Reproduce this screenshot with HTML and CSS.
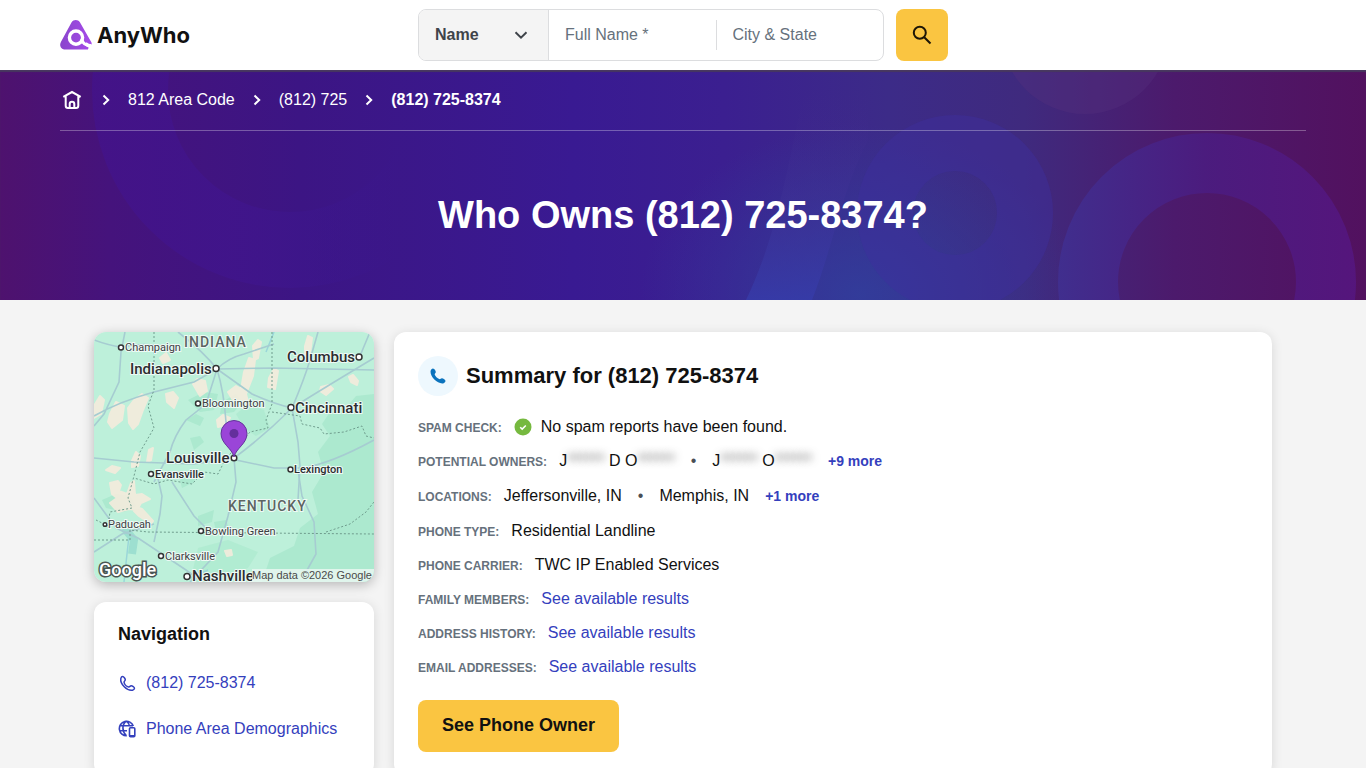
FILE: index.html
```html
<!DOCTYPE html>
<html lang="en">
<head>
  <meta charset="utf-8">
  <meta name="viewport" content="width=device-width, initial-scale=1">
  <title>Who Owns (812) 725-8374? | AnyWho</title>
  <link rel="stylesheet" href="styles.css">
</head>

<body>
  <!-- header -->
  <header class="header">
    <a class="logo" href="#">
      <svg width="32" height="30" viewBox="0 0 32 30" aria-hidden="true">
        <defs>
          <linearGradient id="logo-fill" x1="0" y1="0" x2="1" y2="0">
            <stop offset="0" stop-color="#8a45cc"/>
            <stop offset="1" stop-color="#a64bea"/>
          </linearGradient>
        </defs>
        <path d="M11.6 2.2C13.5-.7 18-.7 19.9 2.2L31.5 22.5 31.8 24.4C29.6 24.6 27.8 23.6 26.7 22.3L24.4 24.6C25.5 26 27 27 28.6 27.6L28 29.5H5C1 29.5-1 25.5.9 22Z" fill="url(#logo-fill)"/>
        <circle cx="16" cy="17.6" r="6.6" fill="none" stroke="#fff" stroke-width="3.4"/>
        <path d="M21.6 19C22.600 23.400 26 25.800 31.400 25.600" fill="none" stroke="#fff" stroke-width="3"/>
      </svg>
      <span>AnyWho</span>
    </a>

    <form class="search">
      <div class="search-box">
        <div class="search-type">
          <select aria-label="Search type">
            <option>Name</option>
            <option>Phone</option>
            <option>Address</option>
          </select>
          <svg class="select-arrow" width="14" height="8" viewBox="0 0 14 8" aria-hidden="true"><path d="M1.5 1.2L7 6.6 12.500 1.200"/></svg>
        </div>
        <input class="search-name" type="text" placeholder="Full Name *" aria-label="Full Name">
        <input class="search-place" type="text" placeholder="City &amp; State" aria-label="City and State">
      </div>
      <button class="search-button" type="submit" aria-label="Search">
        <svg width="20" height="20" viewBox="0 0 20 20" aria-hidden="true"><circle cx="7.800" cy="7.800" r="6"/><path d="M12.200 12.200L18.500 18.500"/></svg>
      </button>
    </form>
  </header>

  <!-- hero -->
  <section class="hero">
    <svg class="hero-art" viewBox="0 0 1366 230" preserveAspectRatio="xMidYMid slice" aria-hidden="true">
      <defs>
        <linearGradient id="base" x1="0" x2="1" y1="0" y2="0">
          <stop offset="0" stop-color="#4e126e"/>
          <stop offset=".08" stop-color="#45137c"/>
          <stop offset=".22" stop-color="#3c1584"/>
          <stop offset=".42" stop-color="#391a92"/>
          <stop offset=".53" stop-color="#3b1f90"/>
          <stop offset=".65" stop-color="#3c2b88"/>
          <stop offset=".75" stop-color="#3f2a7e"/>
          <stop offset=".86" stop-color="#4c1a6c"/>
          <stop offset="1" stop-color="#52115f"/>
        </linearGradient>
        <linearGradient id="ring-left" gradientUnits="userSpaceOnUse" x1="90" x2="400" y1="0" y2="0">
          <stop offset="0" stop-color="#43138a"/>
          <stop offset=".5" stop-color="#40158c"/>
          <stop offset="1" stop-color="#3a1893" stop-opacity="0"/>
        </linearGradient>
        <linearGradient id="ring-right" gradientUnits="userSpaceOnUse" x1="1057" x2="1356" y1="0" y2="0">
          <stop offset="0" stop-color="#402f90"/>
          <stop offset=".5" stop-color="#4b1c80"/>
          <stop offset="1" stop-color="#55167f"/>
        </linearGradient>
        <linearGradient id="strand" x1="0" x2="0" y1="0" y2="1">
          <stop offset="0" stop-color="#42298a" stop-opacity="0"/>
          <stop offset=".5" stop-color="#3f3296" stop-opacity=".5"/>
          <stop offset="1" stop-color="#363caa"/>
        </linearGradient>
        <radialGradient id="glow">
          <stop offset="0" stop-color="#30409e"/>
          <stop offset="1" stop-color="#30409e" stop-opacity="0"/>
        </radialGradient>
      </defs>
      <rect width="1366" height="230" fill="url(#base)"/>
      <ellipse cx="860" cy="225" rx="220" ry="170" fill="url(#glow)" opacity=".8"/>
      <circle cx="290" cy="20" r="160" fill="none" stroke="url(#ring-left)" stroke-width="76" opacity=".8"/>
      <circle cx="1085" cy="-40" r="84" fill="#56307f" opacity=".35"/>
      <path d="M805 20C790 80 780 160 746 230H812C832 180 842 120 868 70V20Z" fill="url(#strand)" opacity=".8"/>
      <circle cx="955" cy="143" r="70" fill="none" stroke="#3d2f9e" stroke-width="56" opacity=".45"/>
      <circle cx="1207" cy="212" r="119" fill="none" stroke="url(#ring-right)" stroke-width="60" opacity=".9"/>
    </svg>

    <div class="hero-inner">
      <nav class="breadcrumbs" aria-label="Breadcrumb">
        <a class="home" href="#" aria-label="Home">
          <svg width="20" height="20" viewBox="0 0 20 20" aria-hidden="true"><path d="M1.300 6.800L10 2 18.700 6.800M3.700 6V15.700Q3.700 18 6 18H14Q16.300 18 16.300 15.700V6M7.700 17.500V14Q7.700 11.800 10 11.800T12.300 14V17.500"/></svg>
        </a>
        <svg class="crumb-arrow" width="8" height="12" viewBox="0 0 8 12" aria-hidden="true"><path d="M1.500 1.500L6.200 6 1.500 10.500"/></svg>
        <a href="#">812 Area Code</a>
        <svg class="crumb-arrow" width="8" height="12" viewBox="0 0 8 12" aria-hidden="true"><path d="M1.500 1.500L6.200 6 1.500 10.500"/></svg>
        <a href="#">(812) 725</a>
        <svg class="crumb-arrow" width="8" height="12" viewBox="0 0 8 12" aria-hidden="true"><path d="M1.500 1.500L6.200 6 1.500 10.500"/></svg>
        <strong>(812) 725-8374</strong>
      </nav>
      <h1>Who Owns (812) 725-8374?</h1>
    </div>
  </section>

  <!-- content -->
  <main class="content">
    <aside class="sidebar">
      <div class="map">
        <svg viewBox="0 0 280 250" role="img" aria-label="Map of Louisville, Kentucky">
          <rect width="280" height="250" fill="#bdf0da"/>
          <!-- woodland -->
          <g fill="#ace9cf">
            <path d="M280 62L262 64 252 76 240 74 228 92 236 104 224 120 230 140 218 160 224 182 206 196 200 214 176 226 168 250H280Z"/>
            <path d="M94 68l16-8 14 2-4 16-14 2zM128 70l14-8 6 8-8 10-14 2zM92 88l10-6 8 4-4 8zM96 106l10-2 4 6-10 8zM86 148l18-12-4 14-12 6zM8 168l14-6 14 2 6 10-12 6-18-4zM104 184l16-6-2 12-14 4zM120 190l12-2 2 6-12 6z"/>
            <path d="M142 82l12-10 16 6 6 18-14 8-12-8zM104 216l30-8 30 12-10 16-40 14H96z" opacity=".7"/>
          </g>
          <!-- built-up areas -->
          <g fill="#f4ebdc" stroke="#f4ebdc" stroke-width="2" stroke-linejoin="round" opacity=".9">
            <path d="M0 74l6-10 4 4-3 14-7 4zM16 82l6-12 8 4-2 14-10 8-4-6zM34 76l6-8 8-6 6 4-5 12-5 14-5 5-4-6zM72 62l7-2 5 6-4 10-7-6zM99 52l4-5 8 2 2 10-7 5zM134 60l8-6 9 5 3 10-2 8-10-4zM150 40l5-14 6 2-2 16-7 18-5-4zM159 14l5-6 3 2-3 16-4 2zM175 46l5-9 4 2-3 18-7-2zM211 14l3-10 4 2-2 16-5 4zM227 55l8-2 4 4-7 6-6-4zM255 45l4-2 5 6-1 4-6-3zM123 88l6-5 7 3-5 7-7 2zM66 26l6-5 4 7-7 3z"/>
            <path d="M12 138l6-4 8 2-5 5zM16 151l8-2 3 4-2 6 8 3 4-11 3-2 1 14 7-1 8 5-9 4-4 7-8-1-11 3-8-9 7-5-5-4zM38 129l4-9 4 4-2 10-6 1zM55 118l4-2-2 12-4 2zM42 175l6 2 11 12-2 3-12-8-5-5zM131 219l6-1 1 5-5 1z"/>
          </g>
          <!-- rivers -->
          <g fill="none" stroke="#9ad6d9" stroke-width="1.500">
            <path d="M36 196Q34 212 30 250"/>
            <path d="M30 196L40 208 38 222" stroke="#9ddfd0" stroke-width="8"/>
            <path d="M96 246l18-8M180 0l-8 20"/>
          </g>
          <!-- roads -->
          <g fill="none" stroke="#a6ccd1" stroke-width="1.600">
            <path d="M0 8Q16 14 28 15Q62 8 75 20M31 0L27 20 25 50 10 82 0 94M0 84Q24 70 60 60L100 50 123 37"/>
            <path d="M123 37Q134 26 150 22L180 12M123 37L180 36 280 38M123 37L158 62Q180 72 198 76M123 37Q130 60 132 90L140 124M123 37Q110 20 84 0M123 37L112 72 92 88Q80 104 76 120L60 150"/>
            <path d="M198 76Q210 48 216 28L224 0M198 76Q230 56 280 26M198 76L204 110 206 134 204 168M198 76Q170 104 140 126L100 132 40 130 0 126"/>
            <path d="M62 138L68 164 66 182 60 210M140 126L142 150 134 184 124 220 96 250M142 128L180 136 208 136Q236 132 280 108M204 138L208 164 220 190 222 222 212 240"/>
            <path d="M78 150L100 184 116 200M0 166L22 196 44 206 92 238 108 250M0 220L28 202 60 192M266 24L276 0"/>
          </g>
          <!-- state borders -->
          <g fill="none" stroke="#6f9c8d" stroke-width="1" stroke-dasharray="2 2">
            <path d="M60 0V58L54 74 60 96 46 120 40 144 34 166 38 176 16 180 14 194 2 188M178 0V72L172 88 174 96 156 100 146 112 132 126 124 142 110 140 98 152 74 148 60 152 40 146M178 80L206 84 208 92 226 96 230 102 250 100 268 94 272 104 280 106M0 208H36V198L54 200 280 202M232 200L256 192 272 180 280 170"/>
          </g>

          <g class="map-dots">
            <circle cx="27" cy="15.500" r="2.500"/><circle cx="122" cy="36.500" r="3"/><circle cx="265" cy="25" r="3"/><circle cx="197" cy="75.500" r="3"/>
            <circle cx="104" cy="71.500" r="2.500"/><circle cx="140" cy="126" r="2.800"/><circle cx="57" cy="142" r="2.500"/><circle cx="196.500" cy="137.500" r="2.500"/>
            <circle cx="11" cy="192.500" r="1.800"/><circle cx="107" cy="199" r="2.500"/><circle cx="67" cy="224" r="2.500"/><circle cx="93" cy="244.500" r="3"/>
          </g>
          <g class="map-labels">
            <text class="state" x="90" y="15">INDIANA</text>
            <text class="state" x="134" y="179">KENTUCKY</text>
            <text class="town" x="31" y="19">Champaign</text>
            <text class="city" x="36" y="42">Indianapolis</text>
            <text class="city" x="193" y="30">Columbus</text>
            <text class="city" x="201" y="81">Cincinnati</text>
            <text class="town" x="108" y="75">Bloomington</text>
            <text class="city" x="72" y="131">Louisville</text>
            <text class="town dark" x="61" y="146">Evansville</text>
            <text class="town dark" x="200" y="141">Lexington</text>
            <text class="town" x="14" y="196">Paducah</text>
            <text class="town" x="111" y="203">Bowling Green</text>
            <text class="town" x="71" y="228">Clarksville</text>
            <text class="city" x="98" y="249">Nashville</text>
          </g>

          <!-- pin -->
          <path d="M140 125C138 116 127 112 127 101.500A13 13 0 0 1 153 101.500C153 112 142 116 140 125Z" fill="#9a45d8" stroke="#64339b" stroke-width="1"/>
          <circle cx="140" cy="101.500" r="4.500" fill="#642f9c"/>

          <text class="google" x="5" y="244">Google</text>
          <rect x="158" y="237" width="122" height="13" fill="#e9f7f1" opacity=".85"/>
          <text class="map-credit" x="278" y="247">Map data ©2026 Google</text>
        </svg>
      </div>

      <nav class="card side-nav">
        <h2>Navigation</h2>
        <a href="#summary">
          <svg width="18" height="18" viewBox="-1 -1 19 19" aria-hidden="true"><path d="M2 3.600C2.300 2.500 3.100 1.700 4 1.700 5 1.700 6.700 4 6.700 5.200 6.700 6.400 5.200 6.500 5.400 7.800 5.800 9.900 8.100 12.300 10.200 12.700 11.500 12.900 11.700 11.400 12.900 11.400 14.100 11.400 16.400 13 16.400 14.100 16.400 15 15.400 15.800 14.300 16.100 8.600 17.200.9 9.500 2 3.600Z"/></svg>
          <span>(812) 725-8374</span>
        </a>
        <a href="#demographics">
          <svg width="18" height="18" viewBox="0 0 18 18" aria-hidden="true"><path d="M15.300 6A7.200 7.200 0 1 0 8.800 15.700M8.300 1.200C3.800 4.500 3.800 11.500 8.300 15.700M8.300 1.200C10.200 2.500 11.300 4.300 11.500 6.300M1.700 5.700H15M1.500 10.800H9"/><rect x="11.500" y="7.800" width="5.300" height="9" rx="1"/><path d="M12 15.800H16.300"/></svg>
          <span>Phone Area Demographics</span>
        </a>
      </nav>
    </aside>

    <section class="card summary" id="summary">
      <div class="summary-title">
        <span class="round-icon">
          <svg width="16" height="16" viewBox="0 0 16 16" aria-hidden="true"><path d="M.6 2.900C.8 1.600 2 .5 3 .5 4.400.5 5.800 2.800 5.800 4.100 5.800 5.300 4.500 5.500 4.700 6.600 5.100 8.300 7.500 10.700 9.200 11.100 10.400 11.400 10.700 10.200 11.900 10.200 13.200 10.200 15.500 11.700 15.500 13 15.500 14.200 14.100 15.300 12.800 15.400 7 15.900-.3 8.500.6 2.900Z"/></svg>
        </span>
        <h2>Summary for (812) 725-8374</h2>
      </div>

      <dl class="facts">
        <div class="fact">
          <dt>SPAM CHECK:</dt>
          <dd class="spam">
            <svg width="18" height="18" viewBox="0 0 18 18" aria-hidden="true"><circle cx="9" cy="9" r="8.500" fill="#76b93f"/><path d="M6.200 9.200L8.200 11.100 11.800 7.400" fill="none" stroke="#fff" stroke-width="1.500"/></svg>
            <span>No spam reports have been found.</span>
          </dd>
        </div>
        <div class="fact fact-list">
          <dt>POTENTIAL OWNERS:</dt>
          <dd class="values">
            <span>J<span class="hidden-name">******</span> D O<span class="hidden-name">******</span></span>
            <span class="bullet">•</span>
            <span>J<span class="hidden-name">******</span> O<span class="hidden-name">******</span></span>
            <a class="more" href="#">+9 more</a>
          </dd>
        </div>
        <div class="fact fact-list">
          <dt>LOCATIONS:</dt>
          <dd class="values">
            <span>Jeffersonville, IN</span>
            <span class="bullet">•</span>
            <span>Memphis, IN</span>
            <a class="more" href="#">+1 more</a>
          </dd>
        </div>
        <div class="fact">
          <dt>PHONE TYPE:</dt>
          <dd>Residential Landline</dd>
        </div>
        <div class="fact">
          <dt>PHONE CARRIER:</dt>
          <dd>TWC IP Enabled Services</dd>
        </div>
        <div class="fact">
          <dt>FAMILY MEMBERS:</dt>
          <dd><a href="#">See available results</a></dd>
        </div>
        <div class="fact">
          <dt>ADDRESS HISTORY:</dt>
          <dd><a href="#">See available results</a></dd>
        </div>
        <div class="fact">
          <dt>EMAIL ADDRESSES:</dt>
          <dd><a href="#">See available results</a></dd>
        </div>
      </dl>

      <button class="owner-button" type="button">See Phone Owner</button>
    </section>
  </main>
</body>
</html>
```

FILE: styles.css
```css
* {
  box-sizing: border-box;
}

body {
  margin: 0;
  background: #f4f4f4;
  color: #111;
  font-family: "Liberation Sans", Arial, sans-serif;
  font-size: 16px;
  line-height: 24px;
}

h1, h2, dl, dd {
  margin: 0;
}

a {
  color: #3440bd;
  text-decoration: none;
}

button, input, select {
  font-family: inherit;
  font-size: 16px;
}

/* header */
.header {
  display: grid;
  grid-template-columns: 1fr minmax(0, 530px) 1fr;
  align-items: center;
  height: 70px;
  padding: 0 60px;
  background: #fff;
}

.logo {
  display: flex;
  align-items: center;
  gap: 5px;
  color: #111;
  font-family: Inter, sans-serif;
  font-size: 22px;
  font-weight: 700;
}

.search {
  display: flex;
  gap: 12px;
}

.search-box {
  display: flex;
  flex: 1;
  align-items: center;
  height: 52px;
  border: 1px solid #dcdddf;
  border-radius: 8px;
  overflow: hidden;
}

.search-type {
  display: flex;
  align-items: center;
  flex: 0 0 130px;
  height: 100%;
  padding-right: 20px;
  background: #f4f4f4;
  border-right: 1px solid #dcdddf;
}

.search-type select {
  appearance: none;
  flex: 1;
  min-width: 0;
  height: 100%;
  padding: 0 0 2px 16px;
  border: 0;
  background: none;
  color: #3f444a;
  font-weight: bold;
}

.select-arrow {
  fill: none;
  stroke: #3f444a;
  stroke-width: 2;
  pointer-events: none;
}

.search-box input {
  flex: 1;
  min-width: 0;
  height: 30px;
  padding: 0 16px;
  border: 0;
  background: none;
}

.search-box input::placeholder {
  color: #66717c;
}

.search-box .search-place {
  border-left: 1px solid #dcdddf;
}

.search-button {
  display: grid;
  place-items: center;
  width: 52px;
  height: 52px;
  padding: 0;
  border: 0;
  border-radius: 8px;
  background: #fac541;
}

.search-button svg {
  fill: none;
  stroke: #1d1606;
  stroke-width: 2;
}

/* hero */
.hero {
  position: relative;
  height: 230px;
  box-shadow: inset 0 2px 1px #48385f;
  color: #fff;
}

.hero-art {
  position: absolute;
  inset: 0;
  z-index: -1;
  width: 100%;
  height: 100%;
}

.hero-inner {
  padding: 0 60px;
}

.breadcrumbs {
  display: flex;
  align-items: center;
  height: 61px;
  border-bottom: 1px solid rgba(255, 255, 255, .3);
}

.breadcrumbs a {
  color: #fff;
}

.breadcrumbs svg {
  display: block;
  fill: none;
  stroke: #fff;
  stroke-width: 2;
}

.breadcrumbs .home {
  margin: 0 2px;
}

.breadcrumbs .crumb-arrow {
  margin: 0 18px;
}

.hero h1 {
  padding-top: 60px;
  font-size: 38px;
  line-height: 48px;
  text-align: center;
}

/* content */
.content {
  display: grid;
  grid-template-columns: 280px 1fr;
  gap: 20px;
  padding: 32px 94px;
}

.sidebar {
  display: flex;
  flex-direction: column;
  gap: 20px;
}

.card {
  padding: 24px;
  border-radius: 12px;
  background: #fff;
  box-shadow: 0 2px 12px rgba(0, 0, 0, .12);
}

/* map */
.map {
  border-radius: 12px;
  box-shadow: 0 3px 12px rgba(0, 0, 0, .25);
  overflow: hidden;
}

.map svg {
  display: block;
  width: 100%;
}

.map-dots {
  fill: #fff;
  stroke: #333;
  stroke-width: 1.5;
}

.map text {
  font-family: Roboto, sans-serif;
}

.map-labels text {
  fill: #3c4043;
  stroke: #eefaf5;
  stroke-width: 2;
  paint-order: stroke;
}

.map .town {
  font-size: 11px;
}

.map .city {
  fill: #2b2d30;
  font-size: 15px;
  font-weight: 500;
}

.map .dark {
  fill: #2b2d30;
  font-weight: 500;
}

.map .state {
  fill: #5c6562;
  font-size: 14px;
  font-weight: 500;
  letter-spacing: 1px;
}

.map .google {
  fill: #fff;
  stroke: #4b5653;
  stroke-width: 3;
  paint-order: stroke;
  font-size: 18px;
  font-weight: 500;
}

.map .map-credit {
  fill: #4a4a4a;
  font-family: "Liberation Sans", Arial, sans-serif;
  font-size: 11px;
  text-anchor: end;
}

/* navigation */
.side-nav {
  display: flex;
  flex: 1;
  flex-direction: column;
  gap: 22px;
  padding-top: 20px;
}

.side-nav h2 {
  margin-bottom: 3px;
  font-size: 18px;
}

.side-nav a {
  display: flex;
  align-items: center;
  gap: 10px;
}

.side-nav svg {
  fill: none;
  stroke: #3440bd;
  stroke-width: 1.6;
}

/* summary */
.summary-title {
  display: flex;
  align-items: center;
  gap: 8px;
}

.summary-title h2 {
  font-size: 22px;
}

.round-icon {
  display: grid;
  place-items: center;
  width: 40px;
  height: 40px;
  border-radius: 50%;
  background: #eef8fe;
}

.round-icon svg {
  fill: #0b73bd;
}

.facts {
  display: flex;
  flex-direction: column;
  gap: 10px;
  margin: 19px 0 21px;
}

.fact {
  display: flex;
  align-items: baseline;
  gap: 12px;
  height: 24px;
}

.fact-list {
  height: 25px;
}

.fact dt {
  color: #66717c;
  font-size: 12px;
  font-weight: bold;
}

.spam {
  display: flex;
  align-items: baseline;
  gap: 9px;
}

.spam svg {
  align-self: center;
}

.values {
  display: flex;
  align-items: baseline;
  gap: 16px;
}

.bullet {
  color: #4a4f55;
}

.hidden-name {
  color: transparent;
  text-shadow: 0 0 8px rgba(0, 0, 0, .7);
  user-select: none;
}

.more {
  font-size: 14px;
  font-weight: bold;
}

.owner-button {
  height: 52px;
  padding: 0 24px 2px;
  border: 0;
  border-radius: 8px;
  background: #fac541;
  color: #111;
  font-size: 18px;
  font-weight: bold;
}
```
